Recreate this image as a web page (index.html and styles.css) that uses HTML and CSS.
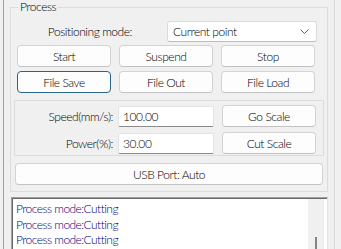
FILE: index.html
```html
<!DOCTYPE html>
<html lang="en">
<head>
  <meta charset="UTF-8" />
  <title>Process</title>
  <link rel="stylesheet" href="styles.css">
</head>
<body>

<div class="pane">
  <fieldset class="group">
    <legend>Process</legend>

    <div class="mode-row">
      <span class="mode-label">Positioning mode:</span>
      <div class="select">
        <span>Current point</span>
        <svg class="chevron" width="9" height="5" viewBox="0 0 9 5"><path d="M0.5 0.5 L4.5 4.5 L8.5 0.5" fill="none" stroke="#5f5f5f" stroke-width="1"/></svg>
      </div>
    </div>

    <div class="btn-grid">
      <button class="btn">Start</button>
      <button class="btn">Suspend</button>
      <button class="btn">Stop</button>
      <button class="btn focused">File Save</button>
      <button class="btn">File Out</button>
      <button class="btn">File Load</button>
    </div>

    <div class="scale-box">
      <div class="scale-row">
        <span class="lbl">Speed(mm/s):</span>
        <div class="input">100.00</div>
        <button class="btn">Go Scale</button>
      </div>
      <div class="scale-row">
        <span class="lbl">Power(%):</span>
        <div class="input">30.00</div>
        <button class="btn">Cut Scale</button>
      </div>
    </div>

    <button class="btn usb">USB Port: Auto</button>
  </fieldset>

  <div class="log">
    <div class="log-lines">
      <div>Process mode:Cutting</div>
      <div>Process mode:Cutting</div>
      <div>Process mode:Cutting</div>
    </div>
    <div class="scrollbar"><div class="thumb"></div></div>
  </div>
</div>

</body>
</html>
```

FILE: styles.css
```css
* {
  margin: 0;
  padding: 0;
  box-sizing: border-box;
}

html, body {
  width: 341px;
  height: 249px;
  overflow: hidden;
  background: #f0f0f0;
  font-family: "Lato", "Liberation Sans", sans-serif;
  font-size: 12px;
  font-weight: 300;
  letter-spacing: -0.45px;
  color: #000;
}

.pane {
  margin-left: 3px;
  width: 332px;
  height: 249px;
  border-left: 1px solid #a0a0a0;
  border-right: 1px solid #dadada;
}

/* Process group */
.group {
  margin-left: 6px;
  width: 318px;
  border: 1px solid #dcdcdc;
  padding: 0 0 6px;
}

.group legend {
  margin-left: 7px;
  padding: 0 2px;
  line-height: 14px;
}

.mode-row {
  display: flex;
  align-items: center;
  margin-top: 7px;
}

.mode-label {
  width: 121px;
  text-align: right;
}

.select {
  display: flex;
  align-items: center;
  justify-content: space-between;
  margin-left: 35px;
  width: 150px;
  height: 21px;
  padding: 0 5px 0 5px;
  background: #fff;
  border: 1px solid #dadada;
  border-bottom-color: #bcbcbc;
  border-radius: 3px;
}

.chevron {
  margin-right: 2px;
}

/* Buttons */
.btn {
  font: inherit;
  letter-spacing: inherit;
  color: #000;
  height: 22px;
  background: #fdfdfd;
  border: 1px solid #d3d3d3;
  border-bottom-color: #c2c2c2;
  border-radius: 4px;
}

.btn.focused {
  border: 1px solid #2a6589;
  box-shadow: inset 0 0 0 1px #fff;
}

.btn-grid {
  display: grid;
  grid-template-columns: 94px 94px 94px;
  column-gap: 8px;
  row-gap: 4px;
  margin: 3px 0 0 6px;
}

/* Speed / power box */
.scale-box {
  margin: 7px 0 0 3px;
  width: 310px;
  border: 1px solid #dcdcdc;
  padding: 4px 0 1px;
  display: flex;
  flex-direction: column;
  gap: 5px;
}

.scale-row {
  display: flex;
  align-items: center;
}

.scale-row .lbl {
  width: 98px;
  text-align: right;
}

.input {
  margin-left: 5px;
  width: 96px;
  height: 21px;
  padding: 2px 4px;
  background: #fff;
  border: 1px solid #e2e2e2;
  border-bottom: 1px solid #8a8a8a;
  border-radius: 2px;
}

.scale-row .btn {
  margin-left: 8px;
  width: 94px;
}

.usb {
  display: block;
  margin: 7px 0 0 4px;
  width: 308px;
}

/* Log */
.log {
  display: flex;
  margin: 5px 0 0 7px;
  width: 317px;
  height: 60px;
  background: #fff;
  border: 1px solid #a0a0a0;
  border-right-color: #e3e3e3;
  box-shadow: inset 1px 1px 0 #696969;
}

.log-lines {
  flex: 1;
  padding: 3px 0 0 4px;
  color: #000080;
  font-size: 12px;
  letter-spacing: -0.55px;
  line-height: 15.5px;
}

.scrollbar {
  width: 16px;
  margin: 1px 3px 0 0;
  background: #f0f0f0;
  position: relative;
}

.thumb {
  position: absolute;
  left: 7px;
  top: 38px;
  width: 2px;
  height: 20px;
  background: #858585;
}
```
